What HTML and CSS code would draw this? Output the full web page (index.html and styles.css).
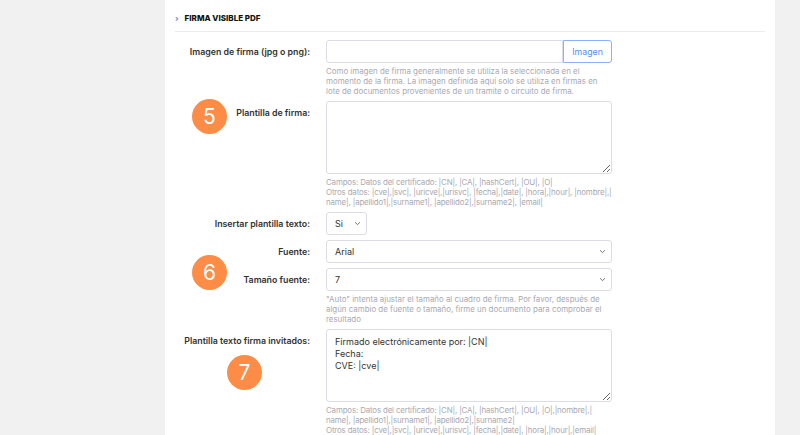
FILE: index.html
```html
<!DOCTYPE html>
<html lang="es">
<head>
  <meta charset="UTF-8" />
  <title>Firma visible PDF</title>
  <link rel="stylesheet" href="styles.css">
</head>
<body>

<div class="card">
  <div class="section-title"><span class="arrow">›</span>FIRMA VISIBLE PDF</div>

  <div class="row">
    <label class="label">Imagen de firma (jpg o png):</label>
    <div class="field">
      <div class="file-group">
        <input type="text" class="input" />
        <button type="button" class="btn-file">Imagen</button>
      </div>
      <div class="help">Como imagen de firma generalmente se utiliza la seleccionada en el momento de la firma. La imagen definida aquí solo se utiliza en firmas en lote de documentos provenientes de un tramite o circuito de firma.</div>
    </div>
  </div>

  <div class="row">
    <label class="label">Plantilla de firma:</label>
    <div class="field">
      <textarea class="input area"></textarea>
      <div class="help fields">Campos: Datos del certificado: |CN|, |CA|, |hashCert|, |OU|, |O|<br>Otros datos: |cve|,|svc|, |uricve|,|urisvc|, |fecha|,|date|, |hora|,|hour|, |nombre|,|<br>name|, |apellido1|,|surname1|, |apellido2|,|surname2|, |email|</div>
    </div>
    <span class="step step-5">5</span>
  </div>

  <div class="row">
    <label class="label">Insertar plantilla texto:</label>
    <div class="field">
      <div class="select-wrap small">
        <select class="input select"><option>Si</option><option>No</option></select>
        <svg class="chevron" viewBox="0 0 10 6"><path d="M1.5 1.2 5 4.6 8.5 1.2" fill="none" stroke="#666" stroke-width="1.3"/></svg>
      </div>
    </div>
  </div>

  <div class="row">
    <label class="label">Fuente:</label>
    <div class="field">
      <div class="select-wrap">
        <select class="input select"><option>Arial</option><option>Courier</option><option>Times</option></select>
        <svg class="chevron" viewBox="0 0 10 6"><path d="M1.5 1.2 5 4.6 8.5 1.2" fill="none" stroke="#666" stroke-width="1.3"/></svg>
      </div>
    </div>
  </div>

  <div class="row">
    <label class="label">Tamaño fuente:</label>
    <div class="field">
      <div class="select-wrap">
        <select class="input select"><option>7</option><option>Auto</option><option>8</option></select>
        <svg class="chevron" viewBox="0 0 10 6"><path d="M1.5 1.2 5 4.6 8.5 1.2" fill="none" stroke="#666" stroke-width="1.3"/></svg>
      </div>
      <div class="help">"Auto" intenta ajustar el tamaño al cuadro de firma. Por favor, después de algún cambio de fuente o tamaño, firme un documento para comprobar el resultado</div>
    </div>
    <span class="step step-6">6</span>
  </div>

  <div class="row">
    <label class="label">Plantilla texto firma invitados:</label>
    <div class="field">
      <textarea class="input area">Firmado electrónicamente por: |CN|
Fecha:
CVE: |cve|</textarea>
      <div class="help fields">Campos: Datos del certificado: |CN|, |CA|, |hashCert|, |OU|, |O|,|nombre|,|<br>name|, |apellido1|,|surname1|, |apellido2|,|surname2|<br>Otros datos: |cve|,|svc|, |uricve|,|urisvc|, |fecha|,|date|, |hora|,|hour|,|email|</div>
    </div>
    <span class="step step-7">7</span>
  </div>
</div>

</body>
</html>
```

FILE: styles.css
```css
body {
  margin: 0;
  background-color: #f1f1f1;
  font-family: 'Inter', 'Open Sans', sans-serif;
  color: #333;
  height: 435px;
  overflow: hidden;
}

.card {
  margin-left: 165px;
  width: 610px;
  min-height: 435px;
  background-color: #fff;
  padding: 0 10px;
  box-sizing: border-box;
}

.section-title {
  display: flex;
  align-items: center;
  height: 32px;
  padding-top: 5px;
  box-sizing: border-box;
  border-bottom: 1px solid #ececec;
  font-size: 8px;
  font-weight: 800;
  color: #111;
}

.section-title .arrow {
  color: #7a8fd6;
  font-size: 8px;
  margin-right: 6px;
}

.row {
  position: relative;
  display: grid;
  grid-template-columns: 135px 286px;
  column-gap: 16px;
  margin-bottom: 5px;
}

.row:nth-child(2) {
  margin-top: 8px;
}

.label {
  text-align: right;
  font-size: 8.8px;
  font-weight: 600;
  color: #333;
  padding-top: 6px;
  line-height: 12px;
}

.file-group {
  display: flex;
}

.input {
  display: block;
  width: 100%;
  height: 23px;
  box-sizing: border-box;
  border: 1px solid #dcdce6;
  border-radius: 3px;
  background: #fff;
  font-family: inherit;
  font-size: 9px;
  color: #333;
  padding: 0 8px;
  outline: none;
}

.file-group .input {
  flex: 1;
  border-radius: 3px 0 0 3px;
}

.btn-file {
  width: 49px;
  height: 23px;
  border: 1px solid #8cb0ff;
  border-radius: 0 3px 3px 0;
  background: #fff;
  color: #5b8ef0;
  font-family: inherit;
  font-size: 8.8px;
  padding: 0;
}

.area {
  height: 73px;
  padding: 6px 8px;
  line-height: 12px;
  resize: vertical;
}

.help {
  margin-top: 3px;
  font-size: 7.9px;
  line-height: 10px;
  color: #a9a9b0;
}

.help.fields {
  white-space: nowrap;
  letter-spacing: -0.15px;
}

.select-wrap {
  position: relative;
}

.select-wrap.small {
  width: 41px;
}

.select {
  appearance: none;
  -webkit-appearance: none;
}

.chevron {
  position: absolute;
  right: 6px;
  top: 9px;
  width: 7px;
  height: 5px;
  pointer-events: none;
}

.step {
  position: absolute;
  width: 35px;
  height: 35px;
  border-radius: 50%;
  background-color: #fd8c46;
  color: #fff;
  font-size: 21px;
  line-height: 35px;
  text-align: center;
}

.step-5 { left: 17px; top: -2px; }
.step-6 { left: 17px; top: -13px; }
.step-7 { left: 52px; top: 26px; }
```
